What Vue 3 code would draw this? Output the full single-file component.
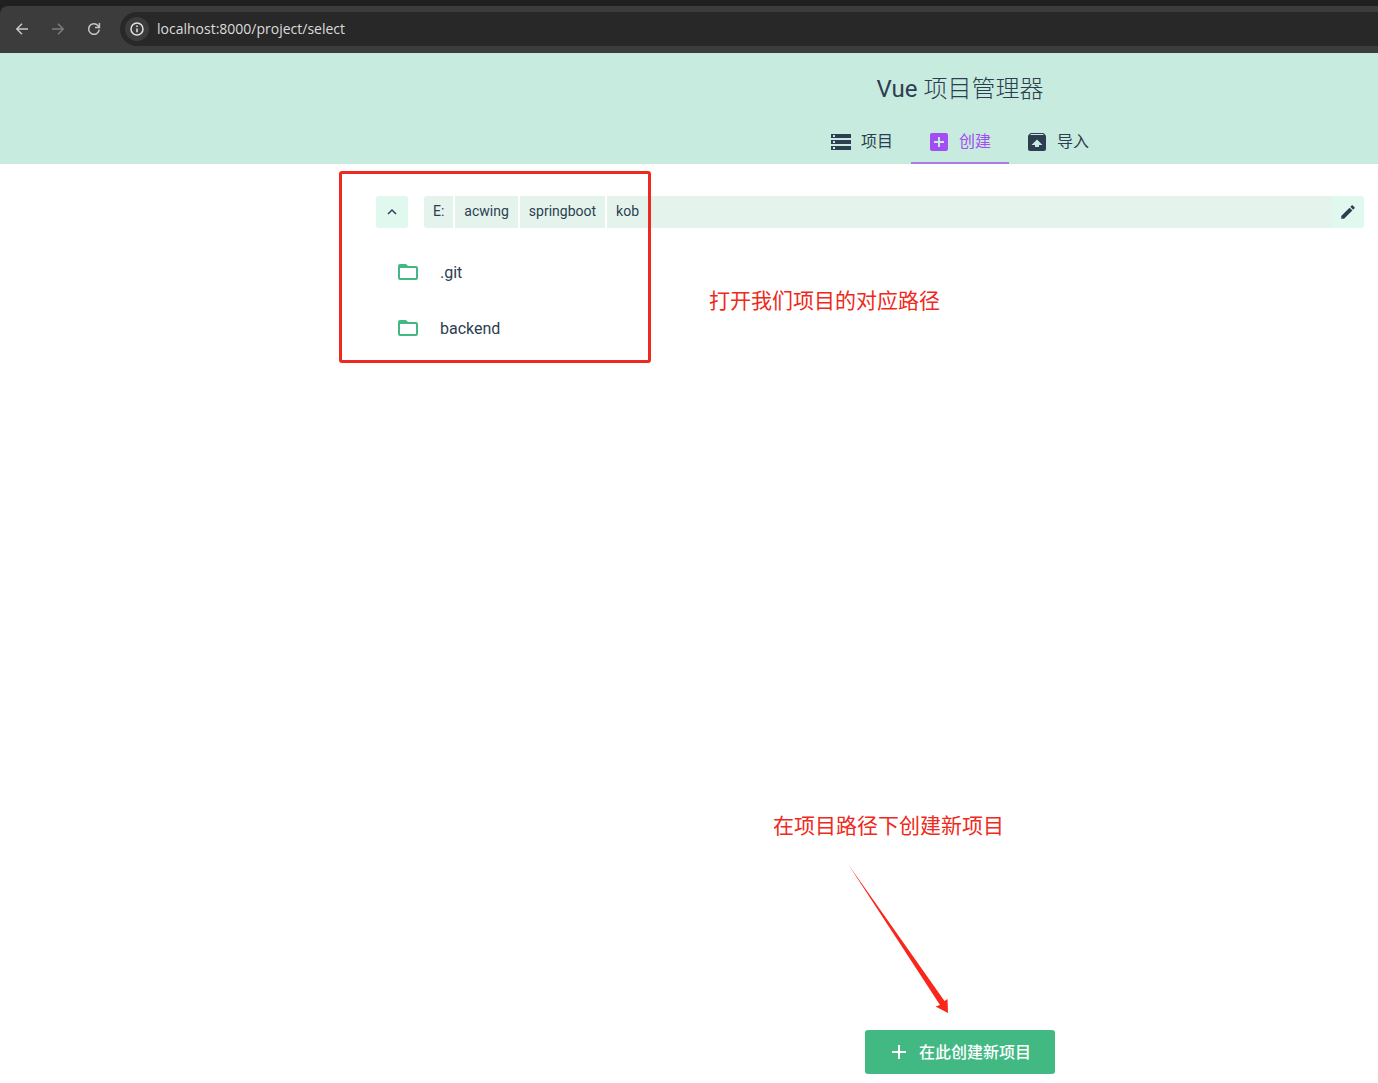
<template>
  <div class="window">
    <div class="browser">
      <div class="toolbar">
        <button class="nav-button" aria-label="Back">
          <svg viewBox="0 0 16 16"><path d="M14 8H3M8 2.8L2.8 8L8 13.2" /></svg>
        </button>
        <button class="nav-button disabled" aria-label="Forward">
          <svg viewBox="0 0 16 16"><path d="M2 8h11M8 2.8L13.2 8L8 13.2" /></svg>
        </button>
        <button class="nav-button" aria-label="Reload">
          <svg viewBox="0 0 16 16"><path d="M13.2 8.6A5.3 5.3 0 1 1 11.9 4.5L13.2 6" /><path d="M13.4 2v4.4H9" /></svg>
        </button>
        <div class="address">
          <button class="site-info" aria-label="Site information">
            <svg viewBox="0 0 16 16"><circle cx="8" cy="8" r="6" /><path d="M8 7.4v3.8M8 4.6v1.5" /></svg>
          </button>
          <input v-model="url" type="text" aria-label="Address">
        </div>
      </div>
    </div>

    <header class="top-bar">
      <h1><span class="brand">Vue</span> 项目管理器</h1>
      <nav class="tabs">
        <a v-for="tab in tabs" :key="tab.id" href="#" :class="{ active: tab.id === current }" @click.prevent="current = tab.id">
          <svg class="icon" viewBox="0 0 24 24"><path :d="tab.icon" /></svg>
          <span class="label">{{ tab.label }}</span>
        </a>
      </nav>
    </header>

    <main class="explorer">
      <div class="path-bar">
        <button class="up-button" aria-label="上级目录">
          <svg viewBox="0 0 24 24"><path d="M7.41 15.41L12 10.83l4.59 4.58L18 14l-6-6-6 6z" /></svg>
        </button>
        <div class="current-path">
          <button v-for="part in path" :key="part" class="path-part">{{ part }}</button>
          <div class="path-rest"></div>
          <button class="edit-button" aria-label="编辑路径">
            <svg viewBox="0 0 24 24"><path d="M3 17.25V21h3.75L17.81 9.94l-3.75-3.75L3 17.25zM20.71 7.04c.39-.39.39-1.02 0-1.41l-2.34-2.34c-.39-.39-1.02-.39-1.41 0l-1.83 1.83 3.75 3.75 1.83-1.83z" /></svg>
          </button>
        </div>
      </div>
      <ul class="folders">
        <li v-for="folder in folders" :key="folder">
          <a href="#" @click.prevent="openFolder(folder)">
            <svg class="icon" viewBox="0 0 24 24"><path d="M20 6h-8l-2-2H4c-1.1 0-1.99.9-1.99 2L2 18c0 1.1.9 2 2 2h16c1.1 0 2-.9 2-2V8c0-1.1-.9-2-2-2zm0 12H4V8h16v10z" /></svg>
            <span>{{ folder }}</span>
          </a>
        </li>
      </ul>
    </main>

    <footer class="actions">
      <button class="create-button">
        <svg class="icon" viewBox="0 0 24 24"><path d="M19 13h-6v6h-2v-6H5v-2h6V5h2v6h6v2z" /></svg>
        <span class="label">在此创建新项目</span>
      </button>
    </footer>

    <!-- Notes over the page -->
    <div class="note-box"></div>
    <p class="note note-path">打开我们项目的对应路径</p>
    <p class="note note-create">在项目路径下创建新项目</p>
    <svg class="note-arrow" viewBox="0 0 104 152">
      <path d="M0 0L96.500 137L99.500 135L100 149L87.500 142.500L92 141Z" />
    </svg>
  </div>
</template>

<script setup>
import { ref } from 'vue';

const url = ref('localhost:8000/project/select');
const current = ref('create');

const tabs = [
  {
    id: 'projects',
    label: '项目',
    icon: 'M2 20h20v-4H2v4zm2-3h2v2H4v-2zM2 4v4h20V4H2zm4 3H4V5h2v2zm-4 7h20v-4H2v4zm2-3h2v2H4v-2z'
  },
  {
    id: 'create',
    label: '创建',
    icon: 'M19 3H5c-1.11 0-2 .9-2 2v14c0 1.1.89 2 2 2h14c1.1 0 2-.9 2-2V5c0-1.1-.9-2-2-2zm-2 10h-4v4h-2v-4H7v-2h4V7h2v4h4v2z'
  },
  {
    id: 'import',
    label: '导入',
    icon: 'M20.55 5.22l-1.39-1.68C18.88 3.21 18.47 3 18 3H6c-.47 0-.88.21-1.15.55L3.46 5.22C3.17 5.57 3 6.01 3 6.5V19c0 1.1.89 2 2 2h14c1.1 0 2-.9 2-2V6.5c0-.49-.17-.93-.45-1.28zM12 9.5l5.5 5.5H14v2h-4v-2H6.5L12 9.5zM5.12 5l.82-1h12l.93 1H5.12z'
  }
];

const path = ref(['E:', 'acwing', 'springboot', 'kob']);
const folders = ref(['.git', 'backend']);

const openFolder = (name) => {
  path.value.push(name);
  folders.value = [];
};
</script>

<style>
body {
  margin: 0;
  background: #fff;
}
</style>

<style scoped>
.window {
  position: relative;
  display: flex;
  flex-direction: column;
  min-height: 100vh;
  font-family: Roboto, "Noto Sans CJK SC", sans-serif;
  font-size: 16px;
  color: #2c3e50;
}

button,
input {
  margin: 0;
  padding: 0;
  border: none;
  background: none;
  font-family: inherit;
  color: inherit;
}

button {
  display: flex;
  align-items: center;
  justify-content: center;
  cursor: pointer;
}

a {
  color: inherit;
  text-decoration: none;
}

svg {
  flex: none;
  fill: currentColor;
}

.icon {
  width: 24px;
  height: 24px;
}

.label {
  padding-bottom: 3px;
}

/* Browser */
.browser {
  padding-top: 6px;
  background: #1f2121;
}

.toolbar {
  display: flex;
  align-items: center;
  gap: 20px;
  height: 47px;
  box-sizing: border-box;
  padding: 0 0 1px 14px;
  border-radius: 8px 0 0 0;
  background: #3c3c3c;
}

.nav-button svg,
.site-info svg {
  width: 16px;
  height: 16px;
  fill: none;
  stroke: #c7c7c7;
  stroke-width: 1.5;
}

.nav-button.disabled svg {
  stroke: #7c7c7c;
}

.address {
  display: flex;
  flex: 1;
  align-items: center;
  gap: 8px;
  height: 34px;
  margin-left: -2px;
  padding-left: 5px;
  border-radius: 17px 0 0 17px;
  background: #282828;
}

.site-info {
  width: 24px;
  height: 24px;
  border-radius: 50%;
  background: #3c3c3c;
}

.site-info svg {
  stroke: #e3e3e3;
}

.address input {
  flex: 1;
  padding-bottom: 2px;
  font-family: "Open Sans", sans-serif;
  font-size: 14px;
  color: #dcdcdc;
  outline: none;
}

/* Header */
.top-bar {
  display: flex;
  flex-direction: column;
  align-items: center;
  padding-left: 542px;
  background: #c8ebdf;
}

h1 {
  margin: 0;
  padding: 17px 0 12px;
  font-size: 24px;
  font-weight: 300;
  line-height: 39px;
}

.brand {
  font-weight: 400;
}

.tabs {
  display: flex;
}

.tabs a {
  display: flex;
  align-items: center;
  gap: 8px;
  height: 41px;
  padding: 0 18px 0 16px;
  border-bottom: 2px solid transparent;
}

.tabs .active {
  border-color: #a97be4;
  color: #a24ef2;
}

/* Folder explorer */
.explorer {
  flex: 1;
  padding: 32px 14px 0 376px;
}

.path-bar {
  display: flex;
  gap: 16px;
  height: 32px;
}

.up-button {
  width: 32px;
  border-radius: 3px;
  background: #e1f8ee;
}

.path-bar svg {
  width: 18px;
  height: 18px;
}

.current-path {
  display: flex;
  flex: 1;
  overflow: hidden;
  border-radius: 3px;
}

.path-part {
  margin-right: 2px;
  padding: 0 9px 2px;
  background: #e4f4ed;
  font-size: 14px;
}

.path-part:nth-last-child(3) {
  margin-right: 0;
}

.path-rest {
  flex: 1;
  background: #e4f4ed;
}

.edit-button {
  width: 32px;
  background: #e1f8ee;
}

.folders {
  margin: 16px 0 0;
  padding: 0;
  list-style: none;
}

.folders a {
  display: flex;
  align-items: center;
  gap: 20px;
  height: 56px;
  padding-left: 20px;
}

.folders .icon {
  color: #42b983;
}

/* Footer */
.actions {
  display: flex;
  justify-content: center;
  padding: 0 0 9px 542px;
}

.create-button {
  gap: 8px;
  height: 44px;
  padding: 0 24px 0 22px;
  border-radius: 3px;
  background: #42b983;
  color: #fff;
  font-size: 16px;
  font-weight: 500;
}

/* Notes */
.note-box {
  position: absolute;
  top: 171px;
  left: 339px;
  width: 306px;
  height: 186px;
  border: 3px solid #ee2a20;
  border-radius: 3px;
  pointer-events: none;
}

.note {
  position: absolute;
  margin: 0;
  font-size: 21px;
  line-height: 30px;
  color: #ee2a20;
  white-space: nowrap;
}

.note-path {
  top: 286px;
  left: 709px;
}

.note-create {
  bottom: 242px;
  left: 773px;
}

.note-arrow {
  position: absolute;
  bottom: 67px;
  left: 848px;
  width: 104px;
  height: 152px;
  fill: #f9261a;
  pointer-events: none;
}
</style>
